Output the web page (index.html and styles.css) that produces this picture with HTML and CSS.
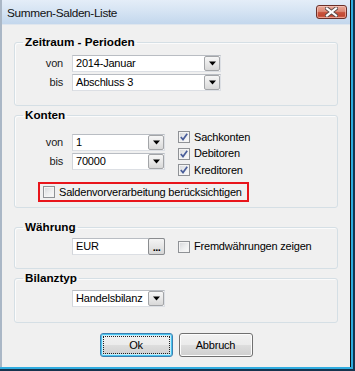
FILE: index.html
```html
<!DOCTYPE html>
<html lang="de">
<head>
<meta charset="utf-8">
<title>Summen-Salden-Liste</title>
<link rel="stylesheet" href="styles.css">
</head>
<body>
<div class="frame-outer"><div class="frame-mid"><div class="window">
  <div class="titlebar">
    <span class="title">Summen-Salden-Liste</span>
    <span class="close">
      <svg width="13" height="10" viewBox="0 0 13 10"><path d="M2 1.5 L11 8.5 M11 1.5 L2 8.5" stroke="#5a4a48" stroke-width="4" stroke-linecap="square"/><path d="M2 1.5 L11 8.5 M11 1.5 L2 8.5" stroke="#ffffff" stroke-width="2.2" stroke-linecap="square"/></svg>
    </span>
  </div>
  <div class="client">
    <fieldset class="group g-zeit">
      <legend>Zeitraum - Perioden</legend>
      <div class="form">
        <span class="lbl">von</span>
        <div class="combo combo-wide"><span class="val">2014-Januar</span><span class="ddbtn"><svg width="7" height="5" viewBox="0 0 7 5"><path d="M0 0.5h7l-3.5 4z" fill="#000"/></svg></span></div>
        <span class="lbl">bis</span>
        <div class="combo combo-wide"><span class="val">Abschluss 3</span><span class="ddbtn"><svg width="7" height="5" viewBox="0 0 7 5"><path d="M0 0.5h7l-3.5 4z" fill="#000"/></svg></span></div>
      </div>
    </fieldset>

    <fieldset class="group g-konten">
      <legend>Konten</legend>
      <div class="konten-row">
        <div class="form form-konten">
          <span class="lbl">von</span>
          <div class="combo combo-short"><span class="val">1</span><span class="ddbtn"><svg width="7" height="5" viewBox="0 0 7 5"><path d="M0 0.5h7l-3.5 4z" fill="#000"/></svg></span></div>
          <span class="lbl">bis</span>
          <div class="combo combo-short"><span class="val">70000</span><span class="ddbtn"><svg width="7" height="5" viewBox="0 0 7 5"><path d="M0 0.5h7l-3.5 4z" fill="#000"/></svg></span></div>
        </div>
        <div class="checks">
          <div class="chk"><span class="cb checked"><svg width="8" height="8" viewBox="0 0 8 8"><path d="M0.8 4 L3 6.6 L7.2 0.8" fill="none" stroke="#4a5e9a" stroke-width="1.7"/></svg></span><span>Sachkonten</span></div>
          <div class="chk"><span class="cb checked"><svg width="8" height="8" viewBox="0 0 8 8"><path d="M0.8 4 L3 6.6 L7.2 0.8" fill="none" stroke="#4a5e9a" stroke-width="1.7"/></svg></span><span>Debitoren</span></div>
          <div class="chk"><span class="cb checked"><svg width="8" height="8" viewBox="0 0 8 8"><path d="M0.8 4 L3 6.6 L7.2 0.8" fill="none" stroke="#4a5e9a" stroke-width="1.7"/></svg></span><span>Kreditoren</span></div>
        </div>
      </div>
      <div class="highlight">
        <div class="chk"><span class="cb"></span><span>Saldenvorverarbeitung berücksichtigen</span></div>
      </div>
    </fieldset>

    <fieldset class="group g-waehrung">
      <legend>Währung</legend>
      <div class="row">
        <div class="textbox"><span class="val">EUR</span><span class="dots">...</span></div>
        <div class="chk"><span class="cb"></span><span>Fremdwährungen zeigen</span></div>
      </div>
    </fieldset>

    <fieldset class="group g-bilanz">
      <legend>Bilanztyp</legend>
      <div class="row">
        <div class="combo combo-short"><span class="val">Handelsbilanz</span><span class="ddbtn"><svg width="7" height="5" viewBox="0 0 7 5"><path d="M0 0.5h7l-3.5 4z" fill="#000"/></svg></span></div>
      </div>
    </fieldset>

    <div class="buttons">
      <button class="btn btn-default"><span class="focus">Ok</span></button>
      <button class="btn btn-abbruch">Abbruch</button>
    </div>
  </div>
</div></div></div>
</body>
</html>
```

FILE: styles.css
```css
html, body {
  margin: 0;
  padding: 0;
  background: #ffffff;
}
body {
  font-family: "Liberation Sans", Arial, sans-serif;
  font-size: 11px;
  letter-spacing: -0.2px;
  color: #000;
}
.frame-outer {
  width: 355px;
  height: 371px;
  box-sizing: border-box;
  border-right: 2px solid #16344f;
  border-bottom: 2px solid #16344f;
}
.frame-mid {
  height: 100%;
  box-sizing: border-box;
  border-right: 2px solid #30ace0;
  border-bottom: 2px solid #30ace0;
}
.window {
  height: 100%;
  box-sizing: border-box;
  border-left: 2px solid #aab7c6;
  border-right: 1px solid #141414;
  display: flex;
  flex-direction: column;
  background: #f0f0f0;
}
.titlebar {
  height: 25px;
  flex: none;
  display: flex;
  align-items: flex-start;
  justify-content: space-between;
  background: linear-gradient(180deg, #e4edf8 0%, #d6e4f3 45%, #c3d7ed 100%);
  border-bottom: 1px solid #dfe6ee;
  box-sizing: border-box;
}
.title {
  margin: 6px 0 0 5px;
  font-size: 11.8px;
  letter-spacing: -0.35px;
  line-height: 14px;
  color: #111;
}
.close {
  margin: 5px 3px 0 0;
  width: 31px;
  height: 14px;
  box-sizing: border-box;
  border: 1px solid #6b3029;
  border-radius: 3px;
  background: linear-gradient(180deg, #e9a999 0%, #dc8a77 45%, #c8533d 55%, #c24a34 80%, #d46a52 100%);
  box-shadow: inset 0 0 0 1px rgba(255, 210, 200, 0.55);
  display: flex;
  align-items: center;
  justify-content: center;
}
.client {
  flex: 1;
  padding: 11px 12px 0 12px;
  display: flex;
  flex-direction: column;
}
.group {
  margin: 0;
  padding: 0;
  min-width: 0;
  border: 1px solid #d5dfe5;
  border-radius: 3px;
  box-shadow: inset 1px 1px 0 #fbfbfb;
}
.group legend {
  margin-left: 8px;
  padding: 0 2px;
  font-weight: bold;
  font-size: 11.7px;
  letter-spacing: 0;
  line-height: 12px;
}
.g-zeit { padding: 7px 0 14px 0; }
.g-konten { margin-top: 3px; padding: 0 0 5px 0; }
.g-waehrung { margin-top: 13px; padding: 5px 0 13px 0; }
.g-bilanz { margin-top: 3px; padding: 6px 0 15px 0; }

.form {
  display: grid;
  grid-template-columns: 48px auto;
  column-gap: 9px;
  row-gap: 2px;
  align-items: center;
  justify-content: start;
}
.lbl {
  text-align: right;
  line-height: 13px;
  color: #1a1a1a;
}
.combo, .textbox {
  display: flex;
  align-items: center;
  height: 17px;
  box-sizing: border-box;
  border: 1px solid #dcdfe4;
  border-top-color: #b9bdc3;
  border-left-color: #d2d5da;
  background: #fff;
  padding-left: 3px;
}
.combo-wide { width: 149px; }
.combo-short { width: 93px; }
.val {
  flex: 1;
  line-height: 13px;
  white-space: nowrap;
}
.ddbtn {
  width: 16px;
  height: 15px;
  box-sizing: border-box;
  border: 1px solid #a3a5a8;
  border-radius: 2px;
  background: linear-gradient(180deg, #f6f6f6 0%, #e8e8e8 50%, #d8d8d8 100%);
  display: flex;
  align-items: center;
  justify-content: center;
}
.konten-row {
  display: flex;
  align-items: flex-start;
}
.form-konten { padding-top: 13px; }
.checks {
  margin-left: 13px;
  padding-top: 8px;
  display: flex;
  flex-direction: column;
}
.checks .chk { height: 16.5px; }
.chk {
  display: flex;
  align-items: center;
  gap: 4px;
  white-space: nowrap;
  line-height: 13px;
}
.cb {
  width: 12px;
  height: 12px;
  box-sizing: border-box;
  border: 1px solid #8f9296;
  background: linear-gradient(135deg, #d4d6d9 0%, #eeeff0 55%, #fbfbfb 100%);
  box-shadow: inset 0 0 0 1px #f4f4f4;
  display: flex;
  align-items: center;
  justify-content: center;
  flex: none;
}
.highlight {
  margin: 3.5px 0 0 23px;
  width: 211px;
  height: 20px;
  box-sizing: border-box;
  border: 2px solid #e8151b;
  padding-left: 3px;
  display: flex;
  align-items: center;
}
.row {
  display: flex;
  align-items: center;
  padding-left: 57px;
  gap: 13px;
}
.textbox {
  width: 93px;
  padding-right: 0;
}
.dots {
  width: 17px;
  height: 17px;
  margin: -1px -1px -1px 0;
  box-sizing: border-box;
  border: 1px solid #8a8c8f;
  border-radius: 2px;
  background: linear-gradient(180deg, #f4f4f4 0%, #e6e6e6 50%, #d6d6d6 100%);
  font-weight: bold;
  font-size: 11px;
  line-height: 17px;
  text-align: center;
  letter-spacing: -0.5px;
}
.buttons {
  margin-top: 10px;
  display: flex;
  justify-content: center;
  gap: 6px;
}
.btn {
  height: 24px;
  padding: 0;
  font-family: "Liberation Sans", Arial, sans-serif;
  font-size: 11px;
  letter-spacing: -0.2px;
  color: #000;
  border: 1px solid #707070;
  border-radius: 3px;
  background: linear-gradient(180deg, #f2f2f2 0%, #ebebeb 48%, #dddddd 52%, #cfcfcf 100%);
  box-shadow: inset 0 0 0 1px #fcfcfc;
}
.btn-default {
  width: 73px;
  border-color: #3c7fb1;
  box-shadow: inset 0 0 0 1px #49c4ee, inset 0 0 0 2px #c9ecfa;
  display: flex;
  align-items: stretch;
  justify-content: stretch;
  padding: 3px;
}
.focus {
  flex: 1;
  outline: 1px dotted #222;
  display: flex;
  align-items: center;
  justify-content: center;
}
.btn-abbruch { width: 74px; }
```
